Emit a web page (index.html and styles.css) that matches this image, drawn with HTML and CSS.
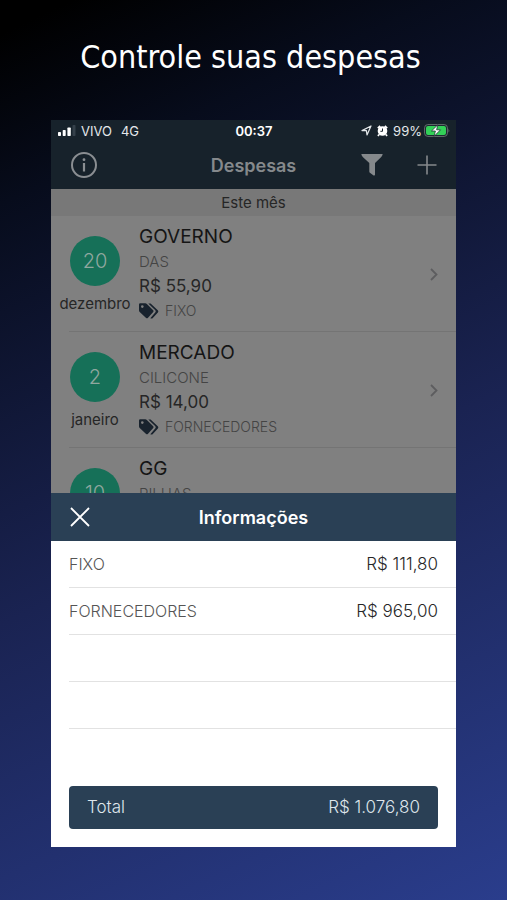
FILE: index.html
```html
<!DOCTYPE html>
<html lang="pt-BR">
<head>
<meta charset="utf-8">
<meta name="viewport" content="width=device-width, initial-scale=1">
<title>Controle suas despesas</title>
<link rel="stylesheet" href="styles.css">
</head>
<body>
<svg class="sprite" aria-hidden="true">
  <symbol id="tags" viewBox="0 0 20 16">
    <path d="M0 1.6Q0 .3 1.300 .3H6.300Q7.200 .3 7.900 1L14.200 7.200Q15 8 14.200 8.900L8.800 14.900Q8 15.700 7.100 14.900L.7 8.900Q0 8.200 0 7.200Z" fill="#18222d"/>
    <circle cx="3.300" cy="3.600" r="1.300" fill="#808080"/>
    <path d="M9.300 .4H11.600L18.800 7.200Q19.900 8.200 18.900 9.400L13.600 15.200Q12.800 15.900 11.300 15.200L16.400 9.300Q17.200 8.200 16.300 7.200Z" fill="#18222d"/>
  </symbol>
  <symbol id="chevron" viewBox="0 0 8 13">
    <path d="M1 1L6.500 6.500L1 12" fill="none" stroke="#5d5d5f" stroke-width="1.800"/>
  </symbol>
</svg>
<h1 class="headline">Controle suas despesas</h1>
<main class="phone">
  <div class="status">
    <div class="status-left">
      <svg width="18" height="11" viewBox="0 0 18 11" aria-hidden="true">
        <rect y="7" width="3" height="4" rx=".7" fill="#fff"/>
        <rect x="4.700" y="5" width="3" height="6" rx=".7" fill="#fff"/>
        <rect x="9.400" y="2.500" width="3.400" height="8.500" rx=".7" fill="#fff"/>
        <rect x="14.500" width="3" height="11" rx=".7" fill="#35404a"/>
      </svg>
      <span>VIVO</span><span class="network">4G</span>
    </div>
    <time class="clock">00:37</time>
    <div class="status-right">
      <svg width="11" height="11" viewBox="0 0 11 11" aria-hidden="true"><path d="M1 5.600L10 1L6 10L5.400 5.700Z" fill="none" stroke="#e4e8ea" stroke-width="1.200" stroke-linejoin="round"/></svg>
      <svg width="11" height="12" viewBox="0 0 11 12" aria-hidden="true"><circle cx="5.500" cy="6" r="4.800" fill="#fff"/><path d="M.8 3.200L3.200 1M10.200 3.200L7.800 1M2 9.500L1 11M9 9.500L10 11" stroke="#fff" stroke-width="1.700"/><path d="M5.500 3.500V6.300H3.400" fill="none" stroke="#17222b" stroke-width="1"/></svg>
      <span class="battery">99%
      <svg width="26" height="13" viewBox="0 0 26 13" aria-hidden="true"><rect x=".6" y=".6" width="22.800" height="11.800" rx="3.200" fill="none" stroke="#66706f"/><rect x="2" y="2" width="20" height="9" rx="2" fill="#33d158"/><path d="M24.500 4.500Q26 6.500 24.500 8.500Z" fill="#66706f"/><path d="M13.800 .8L7.500 7H11.400L10.100 12.300L16.500 5.800H12.600Z" fill="#fff" stroke="#17222b" stroke-width=".7"/></svg></span>
    </div>
  </div>
  <header class="nav">
    <button class="icon-button" type="button" aria-label="Sobre">
      <svg width="28" height="28" viewBox="0 0 28 28"><circle cx="14" cy="14" r="12" fill="none" stroke="#8a8e92" stroke-width="2"/><circle cx="14" cy="8.700" r="1.400" fill="#8a8e92"/><path d="M14 12V20.500" stroke="#8a8e92" stroke-width="2.200"/></svg>
    </button>
    <h2>Despesas</h2>
    <div class="nav-actions">
      <button class="icon-button" type="button" aria-label="Filtrar">
        <svg width="22" height="22" viewBox="0 0 22 22"><path d="M.3 0H21.700Q21.400 2 20 3.200L14 9V20.500Q14 22 12.600 21.400L8.900 18.800Q8.300 18.300 8.300 17.500V9L2 3.200Q.6 2 .3 0Z" fill="#85898c"/></svg>
      </button>
      <button class="icon-button" type="button" aria-label="Adicionar">
        <svg width="20" height="20" viewBox="0 0 20 20"><path d="M10 .5V19.500M.5 10H19.500" stroke="#85898c" stroke-width="1.600"/></svg>
      </button>
    </div>
  </header>
  <h3 class="section">Este mês</h3>
  <ul class="expenses">
    <li class="expense">
      <div class="date"><span class="day">20</span><span>dezembro</span></div>
      <div class="detail"><h4>GOVERNO</h4><p class="note">DAS</p><p class="price">R$ 55,90</p><p class="tag"><svg width="20" height="16"><use href="#tags"/></svg>FIXO</p></div>
      <svg class="chevron" width="8" height="13"><use href="#chevron"/></svg>
    </li>
    <li class="expense">
      <div class="date"><span class="day">2</span><span>janeiro</span></div>
      <div class="detail"><h4>MERCADO</h4><p class="note">CILICONE</p><p class="price">R$ 14,00</p><p class="tag"><svg width="20" height="16"><use href="#tags"/></svg>FORNECEDORES</p></div>
      <svg class="chevron" width="8" height="13"><use href="#chevron"/></svg>
    </li>
    <li class="expense">
      <div class="date"><span class="day">10</span></div>
      <div class="detail"><h4>GG</h4><p class="note">PILHAS</p></div>
    </li>
  </ul>
  <section class="sheet">
    <header class="sheet-header">
      <button class="icon-button" type="button" aria-label="Fechar">
        <svg width="20" height="20" viewBox="0 0 20 20"><path d="M1 1L19 19M19 1L1 19" stroke="#fff" stroke-width="1.800"/></svg>
      </button>
      <h2>Informações</h2>
    </header>
    <table class="summary">
      <tr><th scope="row">FIXO</th><td>R$ 111,80</td></tr>
      <tr><th scope="row">FORNECEDORES</th><td>R$ 965,00</td></tr>
      <tr><td></td><td></td></tr>
      <tr><td></td><td></td></tr>
    </table>
    <div class="total"><span>Total</span><span>R$ 1.076,80</span></div>
  </section>
</main>
</body>
</html>
```
FILE: styles.css
```css
* { box-sizing: border-box; }

body {
  margin: 0;
  height: 100vh;
  min-height: 720px;
  display: flex;
  flex-direction: column;
  padding: 0 51px 53px;
  background: linear-gradient(155deg, #000 3%, #070c1c 18%, #1a2352 55%, #2a3d8c 100%);
  font-family: Inter, "Liberation Sans", sans-serif;
  font-size: 16px;
  color: #262626;
}

h1, h2, h3, h4, p, ul { margin: 0; padding: 0; font-weight: 400; }
.sprite { display: none; }

.headline {
  padding: 33px 0 39px;
  margin-left: -6px;
  font-family: "DejaVu Sans Condensed", "DejaVu Sans", sans-serif;
  font-stretch: condensed;
  font-size: 32px;
  line-height: 48px;
  color: #fff;
  text-align: center;
  white-space: nowrap;
}

.phone {
  flex: 1;
  min-height: 0;
  display: flex;
  flex-direction: column;
  background: #808080;
}

.status, .nav, .sheet-header {
  display: grid;
  grid-template-columns: 1fr auto 1fr;
  align-items: center;
  flex: none;
}

.status {
  height: 21px;
  padding: 0 6px 0 7px;
  background: #17222b;
  color: #e4e8ea;
  font-size: 13px;
}
.status-left, .status-right { display: flex; align-items: center; gap: 5px; }
.status-right { justify-content: flex-end; }
.battery { display: flex; align-items: center; gap: 2px; }
.network { margin-left: 4px; }
.clock { font-weight: 600; color: #fff; }

.icon-button {
  display: flex;
  padding: 0;
  border: 0;
  background: none;
  cursor: pointer;
}

.nav {
  height: 48px;
  padding: 0 19px;
  background: #17222b;
}
.nav h2 { font-size: 18px; font-weight: 600; color: #85898c; }
.nav-actions { display: flex; align-items: center; justify-content: flex-end; gap: 34px; }

.section {
  flex: none;
  background: #787878;
  font-size: 15px;
  line-height: 27px;
  text-align: center;
}

.expenses { flex: 1; min-height: 0; overflow: hidden; list-style: none; }
.expense {
  display: flex;
  gap: 9px;
  min-height: 116px;
  padding: 8px 18px 8px 9px;
  background: linear-gradient(#747474, #747474) 18px 100% / 100% 1px no-repeat;
}
.date {
  width: 70px;
  display: flex;
  flex-direction: column;
  align-items: center;
  gap: 8px;
  padding-top: 12px;
  font-size: 15px;
  line-height: 20px;
}
.day {
  width: 50px;
  height: 50px;
  border-radius: 50%;
  background: #167058;
  color: #8fa79f;
  font-size: 20px;
  font-weight: 300;
  line-height: 50px;
  text-align: center;
}
.detail { flex: 1; line-height: 24px; }
.detail h4 { font-size: 19px; line-height: 26px; color: #151515; }
.note { font-size: 15px; font-weight: 300; color: #444; }
.price { font-size: 17px; }
.tag {
  display: flex;
  align-items: center;
  gap: 6px;
  font-size: 14px;
  font-weight: 300;
  line-height: 26px;
  color: #444;
}
.chevron { align-self: center; }

.sheet { flex: none; background: #fff; padding-bottom: 18px; }
.sheet-header { height: 48px; padding: 0 19px; background: #2a4055; }
.sheet-header h2 { font-size: 18px; font-weight: 600; color: #fff; }

.summary {
  width: calc(100% - 18px);
  margin-left: 18px;
  border-spacing: 0;
}
.summary th, .summary td { height: 47px; padding: 0; border-bottom: 1px solid #e2e2e2; }
.summary th { font-size: 16px; font-weight: 300; text-align: left; color: #555; }
.summary td { padding-right: 18px; font-size: 17px; font-weight: 300; text-align: right; }

.total {
  display: flex;
  justify-content: space-between;
  margin: 57px 18px 0;
  padding: 0 18px;
  border-radius: 4px;
  background: #2a4055;
  color: #dfe6ec;
  font-size: 17px;
  font-weight: 300;
  line-height: 43px;
}
```
